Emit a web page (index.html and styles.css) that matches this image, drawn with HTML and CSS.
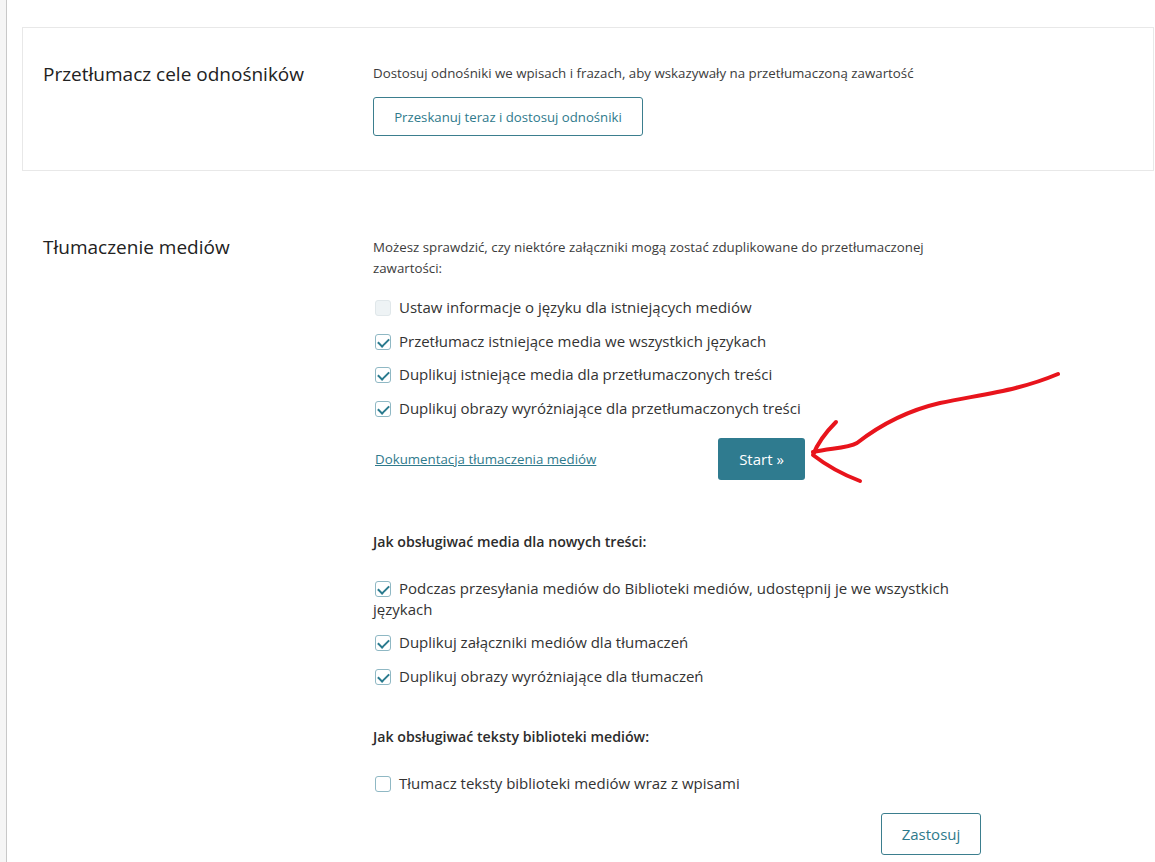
FILE: index.html
```html
<!DOCTYPE html>
<html lang="pl">
<head>
    <meta charset="UTF-8">
    <meta name="viewport" content="width=device-width, initial-scale=1.0">
    <title>Ustawienia mediów</title>
    <link rel="stylesheet" href="styles.css">
</head>
<body>
<div class="wrap">
    <div class="card">
        <h2 class="card-title">Przetłumacz cele odnośników</h2>
        <div class="card-body">
            <p class="desc">Dostosuj odnośniki we wpisach i frazach, aby wskazywały na przetłumaczoną zawartość</p>
            <button type="button" class="btn btn-outline btn-scan">Przeskanuj teraz i dostosuj odnośniki</button>
        </div>
    </div>

    <div class="card card-plain">
        <h2 class="card-title">Tłumaczenie mediów</h2>
        <div class="card-body">
            <p class="desc">Możesz sprawdzić, czy niektóre załączniki mogą zostać zduplikowane do przetłumaczonej zawartości:</p>

            <label class="check"><input type="checkbox" disabled>Ustaw informacje o języku dla istniejących mediów</label>
            <label class="check"><input type="checkbox" checked>Przetłumacz istniejące media we wszystkich językach</label>
            <label class="check"><input type="checkbox" checked>Duplikuj istniejące media dla przetłumaczonych treści</label>
            <label class="check"><input type="checkbox" checked>Duplikuj obrazy wyróżniające dla przetłumaczonych treści</label>

            <div class="start-row">
                <a href="#" class="doc-link">Dokumentacja tłumaczenia mediów</a>
                <button type="button" class="btn btn-primary">Start »</button>
            </div>

            <h4 class="sub-title sub-first">Jak obsługiwać media dla nowych treści:</h4>
            <label class="check"><input type="checkbox" checked>Podczas przesyłania mediów do Biblioteki mediów, udostępnij je we wszystkich językach</label>
            <label class="check"><input type="checkbox" checked>Duplikuj załączniki mediów dla tłumaczeń</label>
            <label class="check"><input type="checkbox" checked>Duplikuj obrazy wyróżniające dla tłumaczeń</label>

            <h4 class="sub-title">Jak obsługiwać teksty biblioteki mediów:</h4>
            <label class="check"><input type="checkbox">Tłumacz teksty biblioteki mediów wraz z wpisami</label>

            <div class="apply-row">
                <button type="button" class="btn btn-outline btn-apply">Zastosuj</button>
            </div>
        </div>
    </div>
</div>

<!-- odręczna strzałka z adnotacji -->
<svg class="annotation" width="1155" height="862" viewBox="0 0 1155 862">
    <path d="M1058 374 C1020 390 990 393 940 403 C910 410 880 425 857 443 C848 448 833 448 813 452"
          fill="none" stroke="#e8141c" stroke-width="4" stroke-linecap="round" stroke-linejoin="round"/>
    <path d="M836 422 C826 432 818 442 813 455 C822 462 836 472 860 481"
          fill="none" stroke="#e8141c" stroke-width="4" stroke-linecap="round" stroke-linejoin="round"/>
</svg>
</body>
</html>
```

FILE: styles.css
```css
body {
    margin: 0;
    background-color: #f5f5f5;
    font-family: "Open Sans", "Noto Sans", sans-serif;
    color: #3c3c3c;
}
.wrap {
    margin-left: 6px;
    border-left: 1px solid #c8c8c8;
    background-color: #fff;
    min-height: 862px;
    padding: 27px 1px 0 15px;
    box-sizing: border-box;
}
.card {
    display: flex;
    border: 1px solid #e8e8e8;
    padding: 35px 0 34px 20px;
}
.card-plain {
    border-color: transparent;
    margin-top: 30px;
    padding-top: 35px;
}
.card-title {
    width: 330px;
    flex-shrink: 0;
    margin: -1px 0 0;
    font-size: 19px;
    font-weight: normal;
    line-height: 24px;
    color: #222;
}
.card-plain .card-title {
    margin-top: -2px;
}
.card-body {
    width: 608px;
}
.desc {
    margin: 0;
    font-size: 13.3px;
    line-height: 21px;
    color: #3c3c3c;
}
.btn {
    font-family: inherit;
    border-radius: 3px;
    cursor: pointer;
}
.btn-outline {
    background-color: #fff;
    border: 1px solid #3b7e8e;
    color: #2f7a8c;
    font-size: 13.2px;
}
.btn-scan {
    margin-top: 13px;
    width: 270px;
    height: 39px;
}
.btn-primary {
    width: 87px;
    height: 42px;
    background-color: #2f7b8f;
    border: none;
    color: #fff;
    font-size: 15px;
}
.check {
    display: block;
    margin-top: 12.5px;
    font-size: 15px;
    line-height: 21px;
    color: #333;
}
.desc + .check {
    margin-top: 18px;
}
.check input {
    appearance: none;
    -webkit-appearance: none;
    position: relative;
    width: 16px;
    height: 16px;
    margin: 0 8px 0 2px;
    vertical-align: -3px;
    border: 1px solid #8fb8c4;
    border-radius: 3px;
    background-color: #fff;
    box-sizing: border-box;
}
.check input:checked::after {
    content: "";
    position: absolute;
    left: 4px;
    top: 1px;
    width: 5px;
    height: 9px;
    border-right: 2px solid #2a7a8e;
    border-bottom: 2px solid #2a7a8e;
    transform: rotate(45deg);
}
.check input:disabled {
    background-color: #eef3f5;
    border-color: #e0e7ea;
}
.start-row {
    display: flex;
    align-items: center;
    margin-top: 19px;
}
.doc-link {
    width: 343px;
    margin-left: 2px;
    font-size: 13.3px;
    color: #2f7a8c;
}
.sub-title {
    margin: 40px 0 0;
    font-size: 14.2px;
    font-weight: 600;
    line-height: 20px;
    color: #2c2c2c;
}
.sub-first {
    margin-top: 52px;
}
.sub-title + .check {
    margin-top: 26px;
}
.apply-row {
    display: flex;
    justify-content: flex-end;
    margin-top: 19px;
}
.btn-apply {
    width: 100px;
    height: 42px;
    font-size: 15px;
}
.annotation {
    position: absolute;
    left: 0;
    top: 0;
    pointer-events: none;
}
```
